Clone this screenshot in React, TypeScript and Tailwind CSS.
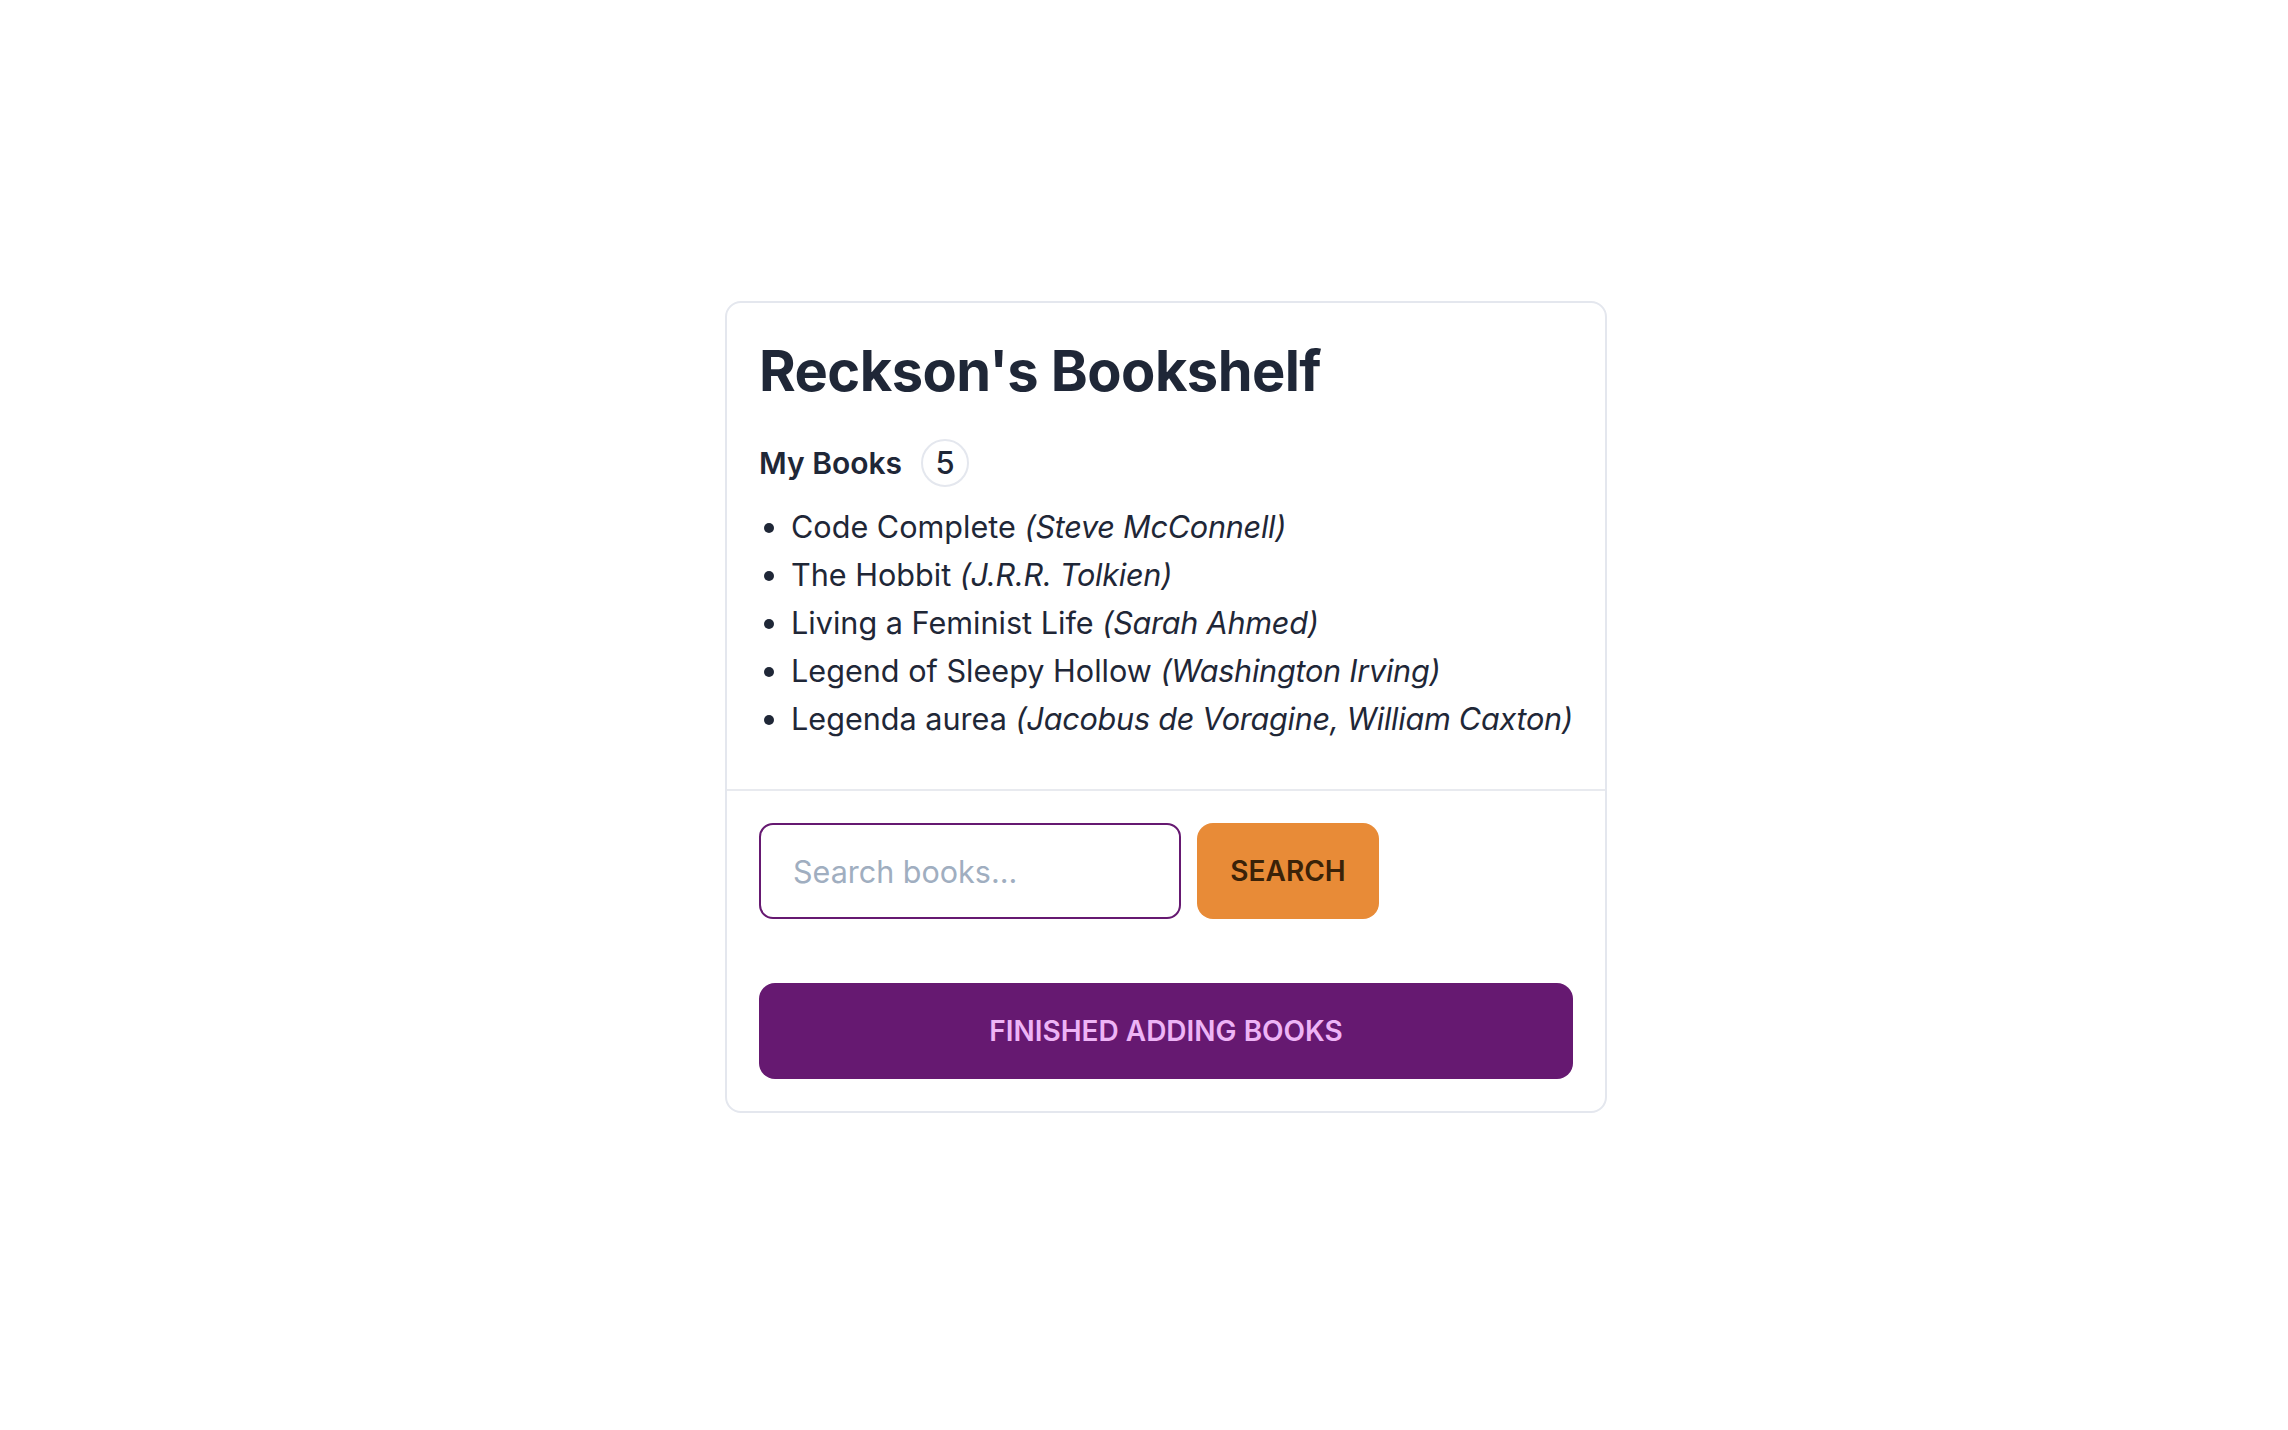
const books = [
  { title: 'Code Complete', author: 'Steve McConnell' },
  { title: 'The Hobbit', author: 'J.R.R. Tolkien' },
  { title: 'Living a Feminist Life', author: 'Sarah Ahmed' },
  { title: 'Legend of Sleepy Hollow', author: 'Washington Irving' },
  { title: 'Legenda aurea', author: 'Jacobus de Voragine, William Caxton' },
];

const App: React.FC = () => {
  return (
    <div
      className="min-h-screen flex items-center justify-center pl-[44px] pb-[16px] bg-white text-[#1f2737]"
      style={{ fontFamily: 'Inter, "Noto Sans", sans-serif' }}
    >
      {/* Card */}
      <div className="w-[882px] bg-white border-2 border-[#e4e7ee] rounded-[16px]">
        {/* Card body */}
        <div className="px-[32px] pt-[32px] pb-[46px]">
          <h2 className="text-[56px] leading-[72px] font-bold tracking-[-0.01em]">Reckson's Bookshelf</h2>

          <div className="mt-[32px] flex items-center h-[48px]">
            <span className="text-[30px] leading-[48px] font-semibold">My Books</span>
            <span className="ml-[19px] w-[48px] h-[48px] rounded-full border-2 border-[#e4e7ee] flex items-center justify-center text-[31px] font-medium">
              5
            </span>
          </div>

          <ul className="mt-[16px] list-disc pl-[32px] text-[30.6px] leading-[48px]">
            {books.map((b) => (
              <li key={b.title} className="whitespace-nowrap">
                {b.title} <i className="tracking-[-0.25px]">({b.author})</i>
              </li>
            ))}
          </ul>
        </div>

        {/* Divider */}
        <div className="border-t-2 border-[#e8eaef]" />

        {/* Card footer */}
        <div className="p-[32px]">
          <div className="flex gap-[16px]">
            <input
              placeholder="Search books..."
              className="w-[422px] h-[96px] px-[32px] border-2 border-[#661971] rounded-[14px] text-[30.5px] outline-none placeholder:text-[#a0aec0]"
            />
            <button className="w-[182px] h-[96px] rounded-[16px] bg-[#e88b37] text-[#3a2208] text-[28px] font-semibold">
              SEARCH
            </button>
          </div>

          <button className="mt-[64px] w-full h-[96px] rounded-[16px] bg-[#661971] text-[#eeb4f6] text-[28px] font-semibold">
            FINISHED ADDING BOOKS
          </button>
        </div>
      </div>
    </div>
  );
};

export default App;
